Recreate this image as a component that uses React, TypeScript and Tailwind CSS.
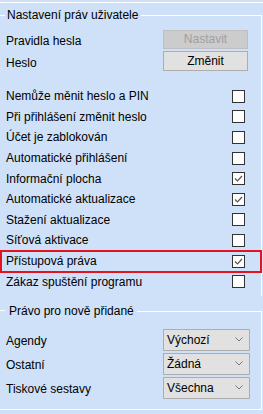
import React from "react";

const flags: { label: string; checked: boolean; marked?: boolean }[] = [
  { label: "Nemůže měnit heslo a PIN", checked: false },
  { label: "Při přihlášení změnit heslo", checked: false },
  { label: "Účet je zablokován", checked: false },
  { label: "Automatické přihlášení", checked: false },
  { label: "Informační plocha", checked: true },
  { label: "Automatické aktualizace", checked: true },
  { label: "Stažení aktualizace", checked: false },
  { label: "Síťová aktivace", checked: false },
  { label: "Přístupová práva", checked: true, marked: true },
  { label: "Zákaz spuštění programu", checked: false },
];

const defaults = [
  { label: "Agendy", value: "Výchozí" },
  { label: "Ostatní", value: "Žádná" },
  { label: "Tiskové sestavy", value: "Všechna" },
];

const CheckBox = ({ checked }: { checked: boolean }) => (
  <div className="flex h-[13px] w-[13px] items-center justify-center border border-[#333333] bg-white">
    {checked && (
      <svg width="11" height="11" viewBox="0 0 11 11">
        <path d="M2 5.5 L4.5 8 L9 3" fill="none" stroke="#555555" strokeWidth="1.2" />
      </svg>
    )}
  </div>
);

const Chevron = () => (
  <svg width="8" height="5" viewBox="0 0 8 5">
    <path d="M0.5 0.5 L4 4 L7.5 0.5" fill="none" stroke="#777777" strokeWidth="1" />
  </svg>
);

const GroupHeader = ({ title, lead, pad }: { title: string; lead: string; pad: string }) => (
  <div className="flex h-[14px] items-center">
    <div className={`${lead} h-px bg-white`} />
    <span className={`${pad} pr-[3px] leading-[14px] whitespace-nowrap`}>{title}</span>
    <div className="mr-[1px] h-[7px] flex-1 self-end border-t border-r border-white" />
  </div>
);

export default function App() {
  return (
    <div className="h-[414px] w-[263px] overflow-hidden bg-[#cfe1f8] font-['Liberation_Sans',Arial,sans-serif] text-[12px] text-black">
      <div className="mt-[2px] h-px bg-white" />

      {/* Nastavení práv uživatele */}
      <div className="mt-[5px]">
        <GroupHeader title="Nastavení práv uživatele" lead="w-[5px]" pad="pl-[2px]" />
        <div className="mr-[1px] border-r border-white pt-[8px] pb-[4px]">
          <div className="flex h-[21px] items-start justify-between">
            <span className="pl-[6px] pt-[3px] leading-[16px]">Pravidla hesla</span>
            <button
              type="button"
              disabled
              className="mr-[13px] h-[19px] w-[85px] border border-[#bfbfbf] bg-[#cccccc] leading-[17px] text-[#a0a0a0]"
            >
              Nastavit
            </button>
          </div>
          <div className="flex h-[20px] items-start justify-between">
            <span className="pl-[6px] pt-[4px] leading-[16px]">Heslo</span>
            <button
              type="button"
              className="mr-[13px] h-[20px] w-[85px] border border-[#adadad] bg-[#e1e1e1] leading-[18px]"
            >
              Změnit
            </button>
          </div>

          <div className="mt-[15px]">
            {flags.map((f) => (
              <div key={f.label} className="relative flex h-[20.6px] items-center justify-between pr-[16px]">
                <span className="pl-[6px] leading-[16px]">{f.label}</span>
                <CheckBox checked={f.checked} />
                {f.marked && (
                  <div className="absolute -top-[1px] left-0 -right-[1px] h-[23px] border-2 border-[#e3131f]" />
                )}
              </div>
            ))}
          </div>
        </div>
      </div>

      {/* Právo pro nově přidané */}
      <div className="mt-[8px]">
        <GroupHeader title="Právo pro nově přidané" lead="w-[5px]" pad="pl-[4px]" />
        <div className="mr-[1px] flex flex-col gap-[2px] border-r border-b border-white pt-[11px] pb-[10px]">
          {defaults.map((d) => (
            <div key={d.label} className="flex h-[22px] items-center justify-between">
              <span className="pl-[6px] pt-[2px] leading-[16px]">{d.label}</span>
              <div className="mr-[11px] flex h-[22px] w-[87px] items-center justify-between border border-[#adadad] bg-[#e1e1e1] pr-[6px] pl-[3px]">
                <span className="leading-[16px]">{d.value}</span>
                <Chevron />
              </div>
            </div>
          ))}
        </div>
      </div>
    </div>
  );
}
